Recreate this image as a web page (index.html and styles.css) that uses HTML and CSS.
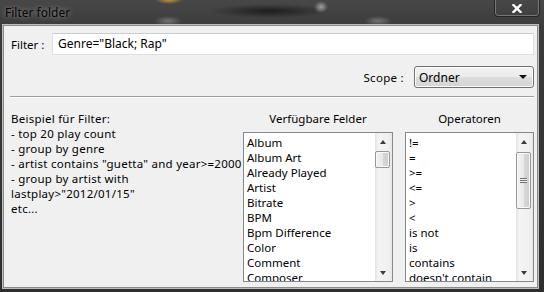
FILE: index.html
```html
<!DOCTYPE html>
<html lang="de">
  <head>
    <meta charset="UTF-8" />
    <title>Filter folder</title>
    <link rel="stylesheet" href="styles.css">
  </head>
  <body>
    <div class="window">
      <div class="titlebar">
        <span class="title">Filter folder</span>
        <div class="close-btn">
          <svg width="10" height="9" viewBox="0 0 10 9">
            <path d="M1.5 1 L8.5 8 M8.5 1 L1.5 8" stroke="#fff" stroke-width="2.4" stroke-linecap="square" />
          </svg>
        </div>
      </div>

      <div class="panel">
        <div class="filter-row">
          <span class="field-label">Filter :</span>
          <div class="textbox">Genre="Black; Rap"</div>
        </div>

        <div class="scope-row">
          <span class="scope-label">Scope :</span>
          <div class="combo">
            <span>Ordner</span>
            <span class="combo-arrow"></span>
          </div>
        </div>

        <div class="separator"></div>

        <div class="lower">
          <div class="examples">
            <div>Beispiel für Filter:</div>
            <div>- top 20 play count</div>
            <div>- group by genre</div>
            <div>- artist contains "guetta" and year&gt;=2000</div>
            <div>- group by artist with</div>
            <div>lastplay&gt;"2012/01/15"</div>
            <div>etc...</div>
          </div>

          <div class="column fields">
            <div class="column-title">Verfügbare Felder</div>
            <div class="listbox">
              <div class="items">
                <div>Album</div>
                <div>Album Art</div>
                <div>Already Played</div>
                <div>Artist</div>
                <div>Bitrate</div>
                <div>BPM</div>
                <div>Bpm Difference</div>
                <div>Color</div>
                <div>Comment</div>
                <div>Composer</div>
              </div>
              <div class="scrollbar">
                <span class="arrow-up"></span>
                <div class="thumb thumb-small"></div>
                <span class="arrow-down"></span>
              </div>
            </div>
          </div>

          <div class="column ops">
            <div class="column-title">Operatoren</div>
            <div class="listbox">
              <div class="items">
                <div>!=</div>
                <div>=</div>
                <div>&gt;=</div>
                <div>&lt;=</div>
                <div>&gt;</div>
                <div>&lt;</div>
                <div>is not</div>
                <div>is</div>
                <div>contains</div>
                <div>doesn't contain</div>
              </div>
              <div class="scrollbar">
                <span class="arrow-up"></span>
                <div class="thumb thumb-large"><span class="grip"></span></div>
                <span class="arrow-down"></span>
              </div>
            </div>
          </div>
        </div>
      </div>
    </div>
  </body>
</html>
```

FILE: styles.css
```css
body {
  margin: 0;
  background: #2a2a2a;
  font-family: "Noto Sans", "DejaVu Sans", sans-serif;
  font-size: 11.5px;
  color: #000;
}

.window {
  width: 544px;
  height: 292px;
  overflow: hidden;
  background:
    radial-gradient(ellipse 14px 4px at 169px 0px, rgba(230, 150, 40, 0.9), transparent),
    radial-gradient(ellipse 7px 6px at 321px 7px, rgba(200, 200, 200, 0.7), transparent),
    radial-gradient(ellipse 60px 7px at 270px 11px, rgba(20, 20, 20, 0.8), transparent),
    radial-gradient(ellipse 14px 5px at 168px 21px, rgba(150, 150, 150, 0.6), transparent),
    radial-gradient(ellipse 14px 5px at 378px 21px, rgba(150, 150, 150, 0.6), transparent),
    linear-gradient(#474747, #3a3a3a 30px, #2e2e2e);
}

.titlebar {
  height: 25px;
  display: flex;
  justify-content: space-between;
  align-items: flex-start;
}

.title {
  margin: 4px 0 0 5px;
  font-size: 12px;
  color: #050505;
  text-shadow: 0 0 5px rgba(255, 255, 255, 0.4), 0 0 9px rgba(255, 255, 255, 0.25);
}

.close-btn {
  width: 46px;
  height: 18px;
  margin: -1px 4px 0 0;
  border: 1px solid #262626;
  border-top: none;
  border-radius: 0 0 4px 4px;
  box-shadow: inset 0 0 0 1px rgba(170, 170, 170, 0.5);
  display: flex;
  align-items: center;
  justify-content: center;
  padding-top: 1px;
  box-sizing: border-box;
}

.panel {
  margin-left: 3px;
  width: 535px;
  height: 263px;
  box-sizing: border-box;
  background: #f0f0f0;
  border: 1px solid #8a8a8a;
  box-shadow: 0 0 0 1px #bdbdbd;
  padding: 7px 3px 0 7px;
}

.filter-row {
  display: flex;
  align-items: center;
}

.field-label {
  width: 41px;
}

.textbox {
  flex: 1;
  height: 22px;
  box-sizing: border-box;
  background: #fff;
  border: 1px solid #dde1e7;
  border-top-color: #c9ccd2;
  padding: 2px 5px;
  line-height: 16px;
  font-size: 12px;
}

.scope-row {
  display: flex;
  justify-content: flex-end;
  align-items: center;
  margin-top: 11px;
}

.scope-label {
  margin-right: 10px;
  letter-spacing: 0.3px;
}

.combo {
  width: 120px;
  height: 22px;
  box-sizing: border-box;
  border: 1px solid #707070;
  border-radius: 3px;
  background: linear-gradient(#f2f2f2, #ebebeb 50%, #dddddd 51%, #d4d4d4);
  box-shadow: inset 0 0 0 1px #fcfcfc;
  display: flex;
  align-items: center;
  justify-content: space-between;
  padding: 0 6px 0 4px;
  font-size: 12px;
}

.combo-arrow {
  border-left: 4px solid transparent;
  border-right: 4px solid transparent;
  border-top: 4px solid #111;
}

.separator {
  margin: 8px 0 0 -1px;
  border-top: 1px solid #a0a0a0;
  border-bottom: 1px solid #fff;
}

.lower {
  display: flex;
  margin-top: 13px;
}

.examples {
  flex: 1;
  font-size: 11.5px;
  letter-spacing: 0.25px;
  line-height: 15px;
  white-space: nowrap;
}

.column {
  display: flex;
  flex-direction: column;
}

.fields {
  width: 150px;
}

.ops {
  width: 129px;
  margin-left: 12px;
}

.column-title {
  text-align: center;
  line-height: 15px;
  height: 15px;
}

.listbox {
  margin-top: 6px;
  height: 150px;
  box-sizing: border-box;
  border: 1px solid #828790;
  background: #fff;
  display: flex;
  overflow: hidden;
}

.items {
  flex: 1;
  padding: 2px 0 0 3px;
  line-height: 15px;
  font-size: 11.5px;
  white-space: nowrap;
  overflow: hidden;
}

.scrollbar {
  width: 17px;
  flex: none;
  position: relative;
  background: linear-gradient(90deg, #e3e3e3, #f4f4f4 20%, #f0f0f0 80%, #e7e7e7);
}

.arrow-up,
.arrow-down {
  position: absolute;
  left: 5px;
  border-left: 3.5px solid transparent;
  border-right: 3.5px solid transparent;
}

.arrow-up {
  top: 7px;
  border-bottom: 4px solid #3c3c3c;
}

.arrow-down {
  bottom: 6px;
  border-top: 4px solid #3c3c3c;
}

.thumb {
  position: absolute;
  left: 0;
  width: 15px;
  box-sizing: border-box;
  border: 1px solid #979797;
  border-radius: 2px;
  background: linear-gradient(90deg, #f2f2f2, #e9e9e9 50%, #d8d8d8 51%, #cdcdcd);
  box-shadow: inset 0 0 0 1px #f8f8f8;
}

.thumb-small {
  top: 18px;
  height: 17px;
}

.thumb-large {
  top: 19px;
  height: 57px;
  display: flex;
  align-items: center;
  justify-content: center;
}

.grip {
  width: 7px;
  height: 5px;
  background: repeating-linear-gradient(#6f6f6f 0 1px, #f4f4f4 1px 2px);
}
```
